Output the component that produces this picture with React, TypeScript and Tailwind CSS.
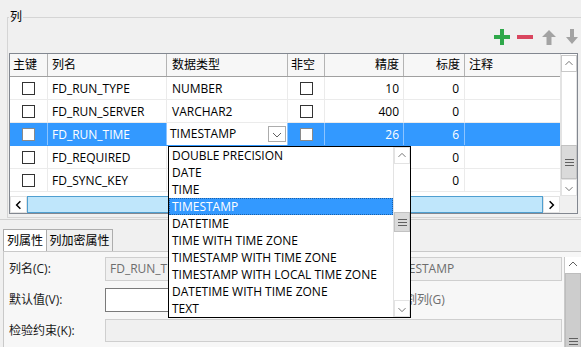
import React from "react";

const font = "font-['Open_Sans','Noto_Sans_CJK_SC',sans-serif]";

type Row = { name: string; type: string; p: string; s: string; sel?: boolean };

const rows: Row[] = [
  { name: "FD_RUN_TYPE", type: "NUMBER", p: "10", s: "0" },
  { name: "FD_RUN_SERVER", type: "VARCHAR2", p: "400", s: "0" },
  { name: "FD_RUN_TIME", type: "TIMESTAMP", p: "26", s: "6", sel: true },
  { name: "FD_REQUIRED", type: "CHAR", p: "1", s: "0" },
  { name: "FD_SYNC_KEY", type: "VARCHAR2", p: "64", s: "0" },
];

const types = [
  "DOUBLE PRECISION",
  "DATE",
  "TIME",
  "TIMESTAMP",
  "DATETIME",
  "TIME WITH TIME ZONE",
  "TIMESTAMP WITH TIME ZONE",
  "TIMESTAMP WITH LOCAL TIME ZONE",
  "DATETIME WITH TIME ZONE",
  "TEXT",
];

function Check({ sel }: { sel?: boolean }) {
  return (
    <span
      className={
        sel
          ? "inline-block w-[13px] h-[13px] border border-[#8a8a8a] bg-white"
          : "inline-block w-[13px] h-[13px] border border-[#333] bg-white"
      }
    />
  );
}

function Chevron({ dir }: { dir: "up" | "down" | "left" | "right" }) {
  const pts = {
    up: "4,9 8,5 12,9",
    down: "4,7 8,11 12,7",
    left: "10,4 6,8 10,12",
    right: "6,4 10,8 6,12",
  }[dir];
  const bold = dir === "left" || dir === "right";
  return (
    <svg width="16" height="16" viewBox="0 0 16 16">
      <polyline
        points={pts}
        fill="none"
        stroke={bold ? "#000" : "#606060"}
        strokeWidth={bold ? 1.6 : 1}
      />
    </svg>
  );
}

function Grip() {
  return (
    <svg width="9" height="7" viewBox="0 0 9 7">
      <rect x="0" y="0" width="9" height="1" fill="#606060" />
      <rect x="0" y="3" width="9" height="1" fill="#606060" />
      <rect x="0" y="6" width="9" height="1" fill="#606060" />
    </svg>
  );
}

function Header() {
  return (
    <div className="flex h-[23px] border-b border-[#a0a0a0] bg-[#f7f7f7] text-black">
      <div className="w-[38px] border-r border-[#b4b4b4] flex items-center pl-[3px]">主键</div>
      <div className="w-[119px] border-r border-[#b4b4b4] flex items-center pl-[4px]">列名</div>
      <div className="w-[121px] border-r border-[#b4b4b4] flex items-center pl-[5px]">数据类型</div>
      <div className="w-[37px] border-r border-[#b4b4b4] flex items-center pl-[3px]">非空</div>
      <div className="w-[79px] border-r border-[#b4b4b4] flex items-center justify-end pr-[4px]">精度</div>
      <div className="w-[61px] border-r border-[#b4b4b4] flex items-center justify-end pr-[4px]">标度</div>
      <div className="w-[95px] flex items-center pl-[4px]">注释</div>
    </div>
  );
}

function DataRow({ r }: { r: Row }) {
  const vline = r.sel ? "border-r border-[#8cc4ff]" : "border-r border-[#ebebeb]";
  return (
    <div
      className={
        r.sel
          ? "flex h-[23px] border-b border-[#3399ff] bg-[#3399ff] text-white"
          : "flex h-[23px] border-b border-[#ebebeb] text-black"
      }
    >
      <div className={`w-[38px] ${vline} flex items-center justify-center`}>
        <Check sel={r.sel} />
      </div>
      <div className={`w-[119px] ${vline} flex items-center pl-[4px] pt-[1px]`}>{r.name}</div>
      <div className={`w-[121px] ${vline} flex items-center`}>
        {r.sel ? (
          <div className="w-full h-full bg-white text-black flex items-center pl-[3px]">
            <span className="flex-1">{r.type}</span>
            <span className="w-[18px] h-[16px] mr-[1px] border border-[#acacac] bg-white flex items-center justify-center">
              <Chevron dir="down" />
            </span>
          </div>
        ) : (
          <span className="pl-[5px] pt-[1px]">{r.type}</span>
        )}
      </div>
      <div className={`w-[37px] ${vline} flex items-center justify-center`}>
        <Check sel={r.sel} />
      </div>
      <div className={`w-[79px] ${vline} flex items-center justify-end pr-[4px] pt-[1px]`}>{r.p}</div>
      <div className={`w-[61px] ${vline} flex items-center justify-end pr-[5px] pt-[1px]`}>{r.s}</div>
      <div className="w-[95px]" />
    </div>
  );
}

function Toolbar() {
  return (
    <div className="mt-[4px] h-[16px] flex justify-end items-center gap-[7px] pr-[6px]">
      <svg width="16" height="16" viewBox="0 0 16 16">
        <rect x="6" y="0" width="4" height="16" fill="#2fa84a" />
        <rect x="0" y="6" width="16" height="4" fill="#2fa84a" />
      </svg>
      <svg width="16" height="16" viewBox="0 0 16 16">
        <rect x="0" y="6" width="16" height="4" fill="#d9465f" />
      </svg>
      <svg width="16" height="16" viewBox="0 0 16 16" className="ml-[1px]">
        <polygon points="8,1 15,8 10.5,8 10.5,16 5.5,16 5.5,8 1,8" fill="#a3a3a3" />
      </svg>
      <svg width="16" height="16" viewBox="0 0 16 16">
        <polygon points="8,15 14,8 10,8 10,0 6,0 6,8 2,8" fill="#a3a3a3" />
      </svg>
    </div>
  );
}

function Table() {
  return (
    <div className="ml-[1px] mt-[8px] w-[569px] h-[161px] border border-[#828790] bg-white flex flex-col">
      <div className="flex h-[142px]">
        <div className="w-[550px] flex flex-col">
          <Header />
          {rows.map((r) => (
            <DataRow key={r.name} r={r} />
          ))}
        </div>
        <div className="w-[17px] flex flex-col border-l border-[#e3e3e3] bg-white">
          <div className="h-[17px] mt-[1px] border border-[#c8c8c8] flex items-center justify-center">
            <Chevron dir="up" />
          </div>
          <div className="flex-1 border-x border-[#e3e3e3]" />
          <div className="h-[34px] bg-[#dadada] border border-[#c2c2c2] flex items-center justify-center">
            <Grip />
          </div>
          <div className="h-[17px] border border-[#e3e3e3] flex items-center justify-center">
            <Chevron dir="down" />
          </div>
        </div>
      </div>
      <div className="flex h-[17px] bg-[#f0f0f0]">
        <div className="w-[17px] bg-white border border-[#e3e3e3] flex items-center justify-center">
          <Chevron dir="left" />
        </div>
        <div className="w-[516px] bg-[#bfe6fb] border border-[#4f9fd0]" />
        <div className="w-[17px] bg-white border border-[#e3e3e3] flex items-center justify-center">
          <Chevron dir="right" />
        </div>
        <div className="w-[17px] bg-[#f0f0f0]" />
      </div>
    </div>
  );
}

function Dropdown() {
  return (
    <div className="absolute left-[168px] top-[146px] w-[243px] h-[172px] border border-black bg-white flex text-[12px] text-black">
      <div className="flex-1 flex flex-col">
        {types.map((t) => (
          <div
            key={t}
            className={
              t === "TIMESTAMP"
                ? "h-[17px] leading-[15px] pl-[2px] bg-[#3399ff] text-white border border-dotted border-[#1b5fa8]"
                : "h-[17px] leading-[17px] pl-[3px]"
            }
          >
            {t}
          </div>
        ))}
      </div>
      <div className="w-[17px] flex flex-col bg-white border-l border-[#e3e3e3]">
        <div className="h-[17px] border border-[#e3e3e3] flex items-center justify-center">
          <Chevron dir="up" />
        </div>
        <div className="h-[48px]" />
        <div className="h-[20px] bg-[#dadada] border border-[#c2c2c2] flex items-center justify-center">
          <Grip />
        </div>
        <div className="flex-1" />
        <div className="h-[17px] border border-[#e3e3e3] flex items-center justify-center">
          <Chevron dir="down" />
        </div>
      </div>
    </div>
  );
}

function Props() {
  return (
    <div className="flex flex-col">
      <div className="flex ml-[3px] h-[22px] items-end">
        <div className="w-[44px] h-[22px] border border-b-0 border-[#adadad] bg-white flex items-center justify-center pt-[1px]">
          列属性
        </div>
        <div className="w-[66px] h-[22px] border border-l-0 border-b-0 border-[#adadad] bg-[#f0f0f0] flex items-center justify-center pt-[1px]">
          列加密属性
        </div>
      </div>
      <div className="ml-[3px] border-t border-l border-[#c9c9c9] bg-[#f7f7f7] flex h-[120px]">
        <div className="w-[563px] pt-[5px] flex flex-col gap-[7px]">
          <div className="flex h-[24px] items-center">
            <span className="w-[101px] pl-[5px] text-[#1a1a1a]">列名(C):</span>
            <div className="w-[160px] h-[24px] border border-[#cfcfcf] bg-[#f0f0f0] text-[#6d6d6d] flex items-center pl-[4px]">
              FD_RUN_TIME
            </div>
            <span className="w-[116px] pl-[8px] text-[#1a1a1a]">数据类型(T):</span>
            <div className="w-[181px] h-[24px] border border-[#cfcfcf] bg-[#f0f0f0] text-[#6d6d6d] flex items-center pl-[6px]">
              TIMESTAMP
            </div>
          </div>
          <div className="flex h-[24px] items-center">
            <span className="w-[101px] pl-[5px] text-[#1a1a1a]">默认值(V):</span>
            <div className="w-[270px] h-[24px] border border-[#7a7a7a] bg-white" />
            <span className="ml-[18px] text-[#6d6d6d]">分割列(G)</span>
          </div>
          <div className="flex h-[23px] items-center">
            <span className="w-[101px] pl-[5px] text-[#1a1a1a]">检验约束(K):</span>
            <div className="w-[457px] h-[23px] border border-[#cfcfcf] bg-[#f0f0f0]" />
          </div>
        </div>
        <div className="ml-[1px] mt-[5px] w-[17px] flex flex-col border-l border-[#c9c9c9] bg-white">
          <div className="h-[16px] flex items-center justify-center">
            <Chevron dir="up" />
          </div>
          <div className="flex-1 bg-[#cdcdcd] border border-[#bdbdbd] flex justify-center pt-[64px]">
            <Grip />
          </div>
        </div>
      </div>
    </div>
  );
}

export default function App() {
  return (
    <div className={`relative w-[581px] h-[347px] overflow-hidden bg-[#f0f0f0] text-[12px] ${font}`}>
      <fieldset className="ml-[7px] mt-[9px] w-[580px] h-[209px] border border-[#d5d5d5] pb-[3px]">
        <legend className="ml-[1px] px-[1px] leading-[16px] text-black">列</legend>
        <Toolbar />
        <Table />
      </fieldset>
      <div className="h-[10px] border-t border-[#d0d0d0] mt-[1px]" />
      <Props />
      <Dropdown />
    </div>
  );
}
